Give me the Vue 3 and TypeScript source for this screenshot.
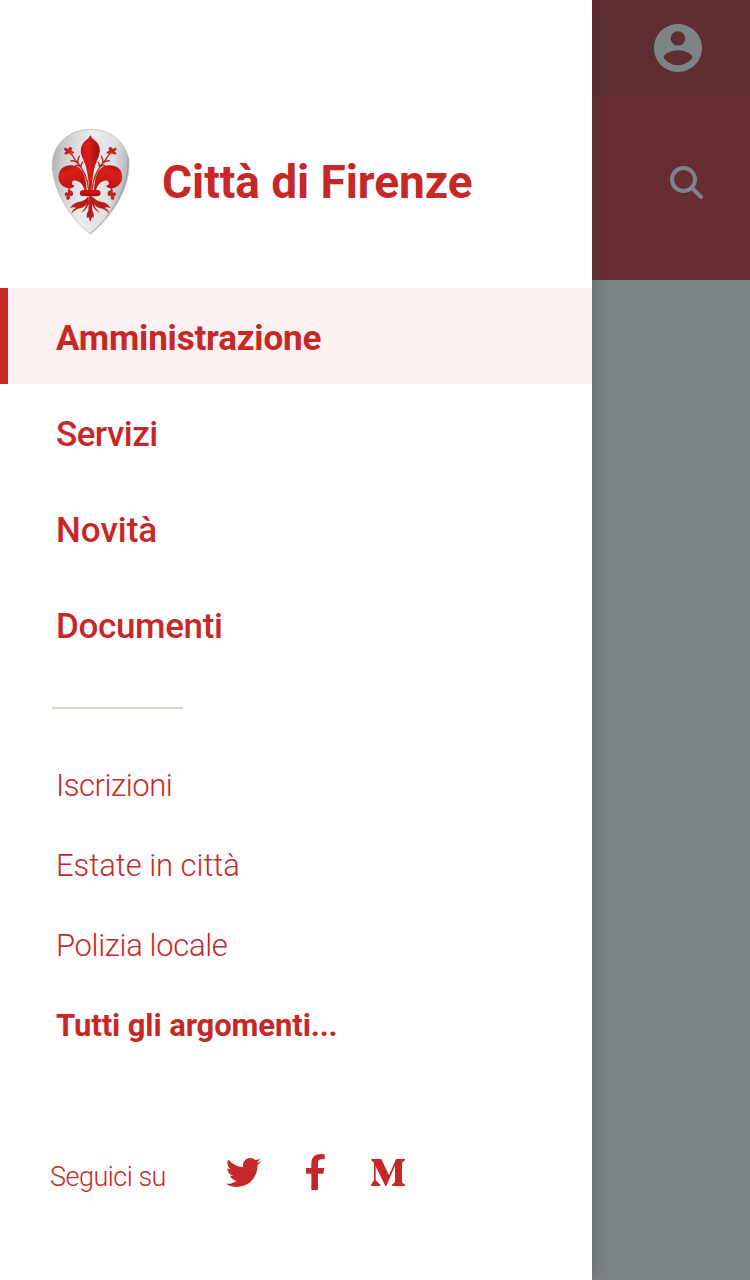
<script setup lang="ts">
interface MenuItem {
  label: string
  key: string
  active?: boolean
}

const sections: MenuItem[] = [
  { label: 'Amministrazione', key: 'amministrazione', active: true },
  { label: 'Servizi', key: 'servizi' },
  { label: 'Novità', key: 'novita' },
  { label: 'Documenti', key: 'documenti' },
]

const topics: MenuItem[] = [
  { label: 'Iscrizioni', key: 'iscrizioni' },
  { label: 'Estate in città', key: 'estate' },
  { label: 'Polizia locale', key: 'polizia' },
  { label: 'Tutti gli argomenti...', key: 'tutti', active: true },
]
</script>

<template>
  <div class="screen">
    <aside class="drawer">
      <header class="brand">
        <svg class="crest" viewBox="33 24 240 324" aria-hidden="true">
          <defs>
            <linearGradient id="silver" x1="0" y1="0.1" x2="1" y2="0.3">
              <stop offset="0" stop-color="#a9abae" />
              <stop offset="0.2" stop-color="#cfd1d3" />
              <stop offset="0.5" stop-color="#ededee" />
              <stop offset="0.8" stop-color="#dedfe1" />
              <stop offset="1" stop-color="#b4b6ba" />
            </linearGradient>
            <linearGradient id="petal" x1="0" y1="0" x2="1" y2="0">
              <stop offset="0" stop-color="#c41716" />
              <stop offset="0.45" stop-color="#d81d18" />
              <stop offset="1" stop-color="#96100f" />
            </linearGradient>
            <linearGradient id="dome" x1="0" y1="0" x2="0.3" y2="1">
              <stop offset="0" stop-color="#a31111" />
              <stop offset="0.35" stop-color="#d91f19" />
              <stop offset="1" stop-color="#b91514" />
            </linearGradient>
          </defs>
          <path d="M152 28C216 28 267 73 267 135C267 226 190 315 151 342C112 315 37 226 37 135C37 73 88 28 152 28Z" fill="url(#silver)" stroke="#b2b4b7" stroke-width="2" />
          <path d="M264 110C271 218 192 307 151 340" fill="none" stroke="#85888c" stroke-width="3" opacity=".6" />
          <g id="half">
            <path d="M134 213C132 201 126 192 119 187C107 179 98 180 96 187C94 193 98 196 104 197C96 209 76 208 63 193C52 180 53 157 66 145C80 133 106 133 119 145C134 158 139 184 140 213Z" fill="url(#dome)" />
            <path d="M146 212Q143 158 105 119M105 119Q99 106 87 96M113 130Q112 117 119 107M113 130Q103 120 92 123M123 142Q123 130 129 125M123 142Q113 133 106 137" fill="none" stroke="#bd2422" stroke-width="4" />
            <path d="M88 99Q74 108 73 100Q75 96 79 94Q71 91 73 84Q79 82 84 88Q87 79 94 82Q99 86 94 92Q103 94 102 99Q98 104 91 97L88 105Z" fill="#c42120" />
            <path d="M90 197V212Q95 210 98 216Q102 221 97 227Q92 230 89 226Q92 232 88 238Q83 242 79 236Q77 230 82 227Q74 230 74 222Q75 214 84 218Q82 209 86 206Z" fill="#c42120" />
            <path d="M145 229Q136 243 116 246Q102 247 90 264Q102 259 109 264Q97 268 94 281Q106 267 121 265Q136 261 142 248Q137 264 123 279Q139 272 147 250Z" fill="#bd1918" />
          </g>
          <use href="#half" transform="matrix(-1 0 0 1 302 0)" />
          <path d="M151 45Q155 55 163 60C181 74 185 94 172 119Q158 146 154 213H148Q144 146 130 119C117 94 121 74 139 60Q147 55 151 45Z" fill="url(#petal)" />
          <path d="M127 210H175Q183 213 182 220Q181 229 173 229H129Q120 229 119 220Q119 213 127 210Z" fill="#bf1817" />
          <path d="M122 222Q151 227 180 222" fill="none" stroke="#941211" stroke-width="3" />
          <path d="M147 229H156L157 273Q164 282 160 294L156 291L151 307L146 291L141 294Q138 282 145 273Z" fill="#bd1918" />
        </svg>
        <h1 class="title">Città di Firenze</h1>
      </header>

      <nav class="sections">
        <a v-for="item in sections" :key="item.key" class="section" :class="[item.key, { active: item.active }]"><span>{{ item.label }}</span></a>
      </nav>

      <div class="divider"></div>

      <nav class="topics">
        <a v-for="item in topics" :key="item.key" class="topic" :class="[item.key, { all: item.active }]"><span>{{ item.label }}</span></a>
      </nav>

      <footer class="follow">
        <span class="follow-label">Seguici su</span>
        <svg class="twitter" viewBox="0 2.2 24 19.6" preserveAspectRatio="none" aria-label="Twitter">
          <path d="M23.954 4.569c-.885.389-1.83.654-2.825.775 1.014-.611 1.794-1.574 2.163-2.723-.951.555-2.005.959-3.127 1.184-.896-.959-2.173-1.559-3.591-1.559-2.717 0-4.92 2.203-4.92 4.917 0 .39.045.765.127 1.124C7.691 8.094 4.066 6.13 1.64 3.161c-.427.722-.666 1.561-.666 2.475 0 1.71.87 3.213 2.188 4.096-.807-.026-1.566-.248-2.228-.616v.061c0 2.385 1.693 4.374 3.946 4.827-.413.111-.849.171-1.296.171-.314 0-.615-.03-.916-.086.631 1.953 2.445 3.377 4.604 3.417-1.68 1.319-3.809 2.105-6.102 2.105-.39 0-.779-.023-1.17-.067 2.189 1.394 4.768 2.209 7.557 2.209 9.054 0 13.999-7.496 13.999-13.986 0-.209 0-.42-.015-.63.961-.689 1.8-1.56 2.46-2.548z" />
        </svg>
        <svg class="facebook" viewBox="273 28 57 108" aria-label="Facebook">
          <path d="M289 136V87H273V70H289V57C289 37 301 28 318 28Q326 28 329 29V44H320C311 44 309 48 309 55V70H328L325 87H309V136Z" />
        </svg>
        <svg class="medium" viewBox="468 42 102 81" aria-label="Medium">
          <path d="M469 42H499L522 91L543 42H570V46L561 53V112L570 119V123H531V119L540 112V62L514 123H511L482 64V106L496 119V123H468V119L477 106V53L469 46Z" />
        </svg>
      </footer>
    </aside>

    <div class="backdrop">
      <div class="utility-bar">
        <svg class="account" viewBox="2 2 20 20" aria-hidden="true">
          <path d="M12 2C6.48 2 2 6.48 2 12s4.48 10 10 10 10-4.48 10-10S17.52 2 12 2zm0 3c1.66 0 3 1.34 3 3s-1.34 3-3 3-3-1.34-3-3 1.34-3 3-3zm0 14.2c-2.5 0-4.71-1.28-6-3.22.03-1.99 4-3.08 6-3.08s5.97 1.09 6 3.08c-1.29 1.94-3.5 3.22-6 3.22z" />
        </svg>
      </div>
      <div class="search-bar">
        <svg class="search" viewBox="0 0 34 34" aria-hidden="true">
          <circle cx="13.5" cy="13.5" r="11.5" />
          <path d="M22.2 22.2L31 31" />
        </svg>
      </div>
    </div>
  </div>
</template>

<style>
body {
  margin: 0;
}
</style>

<style scoped>
.screen {
  display: flex;
  width: 750px;
  height: 1280px;
  overflow: hidden;
  color: #c62828;
  font-family: Roboto, "Liberation Sans", sans-serif;
}

.drawer {
  position: relative;
  z-index: 1;
  display: flex;
  flex-direction: column;
  flex: 0 0 592px;
  background: #fff;
  box-shadow: 0 0 16px rgba(50, 45, 50, 0.35);
}

.brand {
  display: flex;
  box-sizing: border-box;
  height: 288px;
  padding: 128px 0 0 51px;
}

.crest {
  width: 80px;
  height: 108px;
}

.title {
  margin: 23px 0 0 31px;
  font-size: 46px;
  font-weight: 700;
  letter-spacing: -0.05px;
  line-height: 62px;
  white-space: nowrap;
}

.section {
  display: flex;
  align-items: center;
  box-sizing: border-box;
  height: 96px;
  padding: 5px 0 0 56px;
  font-size: 35px;
  font-weight: 500;
}

.section.active {
  padding-left: 48px;
  border-left: 8px solid #c62828;
  background: #fcf1f1;
  font-weight: 700;
  letter-spacing: -0.18px;
}

.servizi {
  letter-spacing: -0.55px;
}

.documenti {
  letter-spacing: -0.35px;
}

.divider {
  width: 131px;
  height: 2px;
  margin: 35px 0 0 52px;
  background: #f1c9c9;
}

.topics {
  margin-top: 36px;
}

.topic {
  display: flex;
  align-items: center;
  height: 80px;
  padding-left: 56px;
  font-size: 31px;
  font-weight: 350;
}

.iscrizioni {
  letter-spacing: -0.45px;
}

.estate {
  letter-spacing: -0.05px;
}

.polizia {
  letter-spacing: -0.35px;
}

.topic.all {
  font-weight: 700;
  letter-spacing: -0.1px;
}

.follow {
  display: flex;
  align-items: flex-start;
  margin-top: 89px;
  padding-left: 50px;
  fill: #c62828;
}

.follow-label {
  width: 176px;
  margin-top: 7px;
  font-size: 27px;
  font-weight: 350;
  letter-spacing: -0.5px;
  line-height: 32px;
}

.twitter {
  width: 35px;
  height: 29px;
  margin-top: 4px;
}

.facebook {
  width: 19px;
  height: 36px;
  margin-left: 45px;
}

.medium {
  width: 34px;
  height: 27px;
  margin: 5px 0 0 46px;
}

.backdrop {
  flex: 1;
  background: #7d8486;
}

.utility-bar {
  box-sizing: border-box;
  height: 96px;
  padding: 24px 0 0 62px;
  background: #5f2e32;
}

.account {
  display: block;
  width: 48px;
  height: 48px;
  fill: #7d8486;
}

.search-bar {
  box-sizing: border-box;
  height: 184px;
  padding: 70px 0 0 78px;
  background: #662d32;
}

.search {
  display: block;
  width: 34px;
  height: 34px;
  fill: none;
  stroke: #7d8486;
  stroke-width: 4;
  stroke-linecap: round;
}
</style>
